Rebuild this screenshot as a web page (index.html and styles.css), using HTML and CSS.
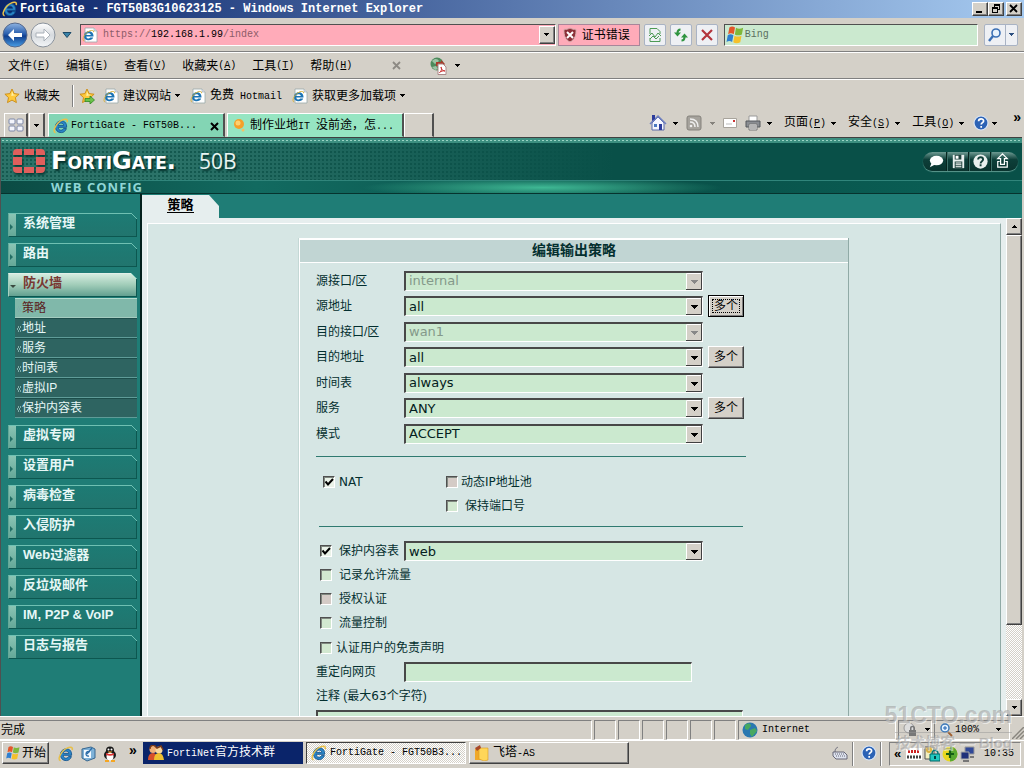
FILE: index.html
```html
<!DOCTYPE html>
<html lang="zh-CN">
<head>
<meta charset="utf-8">
<title>FortiGate - FGT50B3G10623125 - Windows Internet Explorer</title>
<link rel="stylesheet" href="styles.css">
</head>
<body>
<svg class="defs" aria-hidden="true">
  <symbol id="ie" viewBox="0 0 16 16">
    <path d="M13.6 9.3H5.2c.1 3.4 4 3.900 5.300 1.300h2.900C12.400 13.500 10.400 14.600 8.300 14.600 4.600 14.600 2.400 12 2.400 8.700S5 2.800 8.300 2.800c3.500 0 5.600 2.700 5.300 6.500zM5.300 7.400h5.400C10.400 4.300 5.700 4.200 5.300 7.400z" fill="#2a86c8" stroke="#12548f" stroke-width=".9"/>
    <path d="M2.600 14.800C-1.500 14 3.500 4.500 9 2.100c3-1.500 6-1.300 5.300 2" fill="none" stroke="#e8c04a" stroke-width="1.500"/>
  </symbol>
  <symbol id="page" viewBox="0 0 16 16">
    <path d="M3 1h9l3 3v11H3z" fill="#fff" stroke="#9aa" stroke-width=".8"/><path d="M12 1v3h3" fill="#dde" stroke="#9aa" stroke-width=".6"/>
    <path d="M11.500 9.500H4.300c.2 2.400 3 2.600 3.900 1.100h3c-1.200 3.800-9.200 3.800-9.200-1.600 0-6.300 10-6.400 9.500.5zM4.300 7.900h4.500c-.3-2.200-4.200-2.200-4.500 0z" fill="#1c74b4"/>
    <path d="M2 14C-1 13 3 5.500 7.500 4c2.500-1 4.500-.7 4 1.200" fill="none" stroke="#d9b33c"/>
  </symbol>
  <symbol id="star" viewBox="0 0 16 16"><path d="M8 1l2.100 4.600 5 .6-3.700 3.400 1 5L8 12.100l-4.500 2.500 1-5L.9 6.200l5-.6z" fill="#ffc93c" stroke="#c98a12" stroke-width=".9"/><path d="M8 3l1.300 3.500 3 .5-5 1z" fill="#fff0a8"/></symbol>
  <symbol id="arrow" viewBox="0 0 5 3"><path d="M0 0h5v1H4v1H3v1H2V2H1V1H0z" fill="currentColor"/></symbol>
  <symbol id="flag" viewBox="0 0 16 16">
    <path d="M3.500 2C5 1 6.500 1 8 2L7 7.300c-1.500-1-3-1-4.500 0z" fill="#e4562a"/><path d="M8.800 2.200c1.500 1 3.500 1 5.700 0l-1 5.300c-2 1-4 1-5.600 0z" fill="#7fb83a"/>
    <path d="M2.200 8.200c1.500-1 3-1 4.500 0l-1 5.300c-1.500-1-3-1-4.500 0z" fill="#2e7fd0"/><path d="M7.600 8.500c1.500 1 3.500 1 5.600 0l-1 5.300c-2 1-4 1-5.600 0z" fill="#f5c02a"/>
  </symbol>
  <symbol id="help" viewBox="0 0 16 16"><circle cx="8" cy="8" r="7" fill="#2b62b5" stroke="#dbe6f5" stroke-width="1.200"/><path d="M5.600 6.200c0-3.200 5-3.100 5-.2 0 1.700-2.400 1.700-2.400 3.600M8.200 11v1.800" fill="none" stroke="#fff" stroke-width="1.700"/></symbol>
</svg>

<div class="window">
  <header class="titlebar">
    <svg class="i16"><use href="#ie"/></svg>
    <h1>FortiGate - FGT50B3G10623125 - Windows Internet Explorer</h1>
    <div class="winbtns">
      <button aria-label="最小化"><svg viewBox="0 0 12 10"><path d="M2 7h6v2H2z"/></svg></button><button aria-label="还原"><svg viewBox="0 0 12 10"><path d="M4 0h6v6H8V9H2V3h2zm1 2v1h3v2h1V2zM3 5v3h4V5z" fill-rule="evenodd"/></svg></button><button class="close" aria-label="关闭"><svg viewBox="0 0 12 10"><path d="M2 1l7 7M9 1L2 8" stroke="#000" stroke-width="1.800"/></svg></button>
    </div>
  </header>

  <div class="navbar">
    <div class="history">
      <button aria-label="后退"><svg viewBox="0 0 26 26"><defs><linearGradient id="bk" x2="0" y2="1"><stop stop-color="#8fb4e2"/><stop offset=".45" stop-color="#2a5fae"/><stop offset=".55" stop-color="#103f8e"/><stop offset="1" stop-color="#4aa0e8"/></linearGradient><linearGradient id="fw" x2="0" y2="1"><stop stop-color="#fff"/><stop offset=".5" stop-color="#d6dade"/><stop offset="1" stop-color="#f4f6f8"/></linearGradient></defs><circle cx="13" cy="13" r="12" fill="url(#bk)" stroke="#56698c"/><path d="M6 13l6-6v4h8v4h-8v4z" fill="#fff"/></svg></button>
      <button aria-label="前进"><svg viewBox="0 0 26 26"><circle cx="13" cy="13" r="12" fill="url(#fw)" stroke="#8a929c"/><path d="M20 13l-6-6v4H6v4h8v4z" fill="#fff" stroke="#a9b0b8"/></svg></button>
      <button class="hist" aria-label="最近的页面"><svg viewBox="0 0 10 6"><path d="M1 .5h8L5 5.500z" fill="#3a83a8" stroke="#1c4a68"/></svg></button>
    </div>
    <div class="address">
      <svg class="i16"><use href="#page"/></svg>
      <span class="m url"><i>https://</i>192.168.1.99<i>/index</i></span>
      <button class="drop" aria-label="地址列表"><svg class="ar"><use href="#arrow"/></svg></button>
    </div>
    <button class="cert"><svg class="i16" viewBox="0 0 16 16"><path d="M8 1c2 1.200 4 1.500 6 1.300C14.300 8 13 12.500 8 15 3 12.500 1.700 8 2 2.300 4 2.500 6 2.200 8 1z" fill="#8c3038" stroke="#d8b0b0"/><path d="M5 5l6 6M11 5l-6 6" stroke="#fff" stroke-width="2"/></svg>证书错误</button>
    <button class="nb" aria-label="兼容性视图"><svg class="i16" viewBox="0 0 16 16"><path d="M3 7V1.500h7L13 4.500V7M3 11v3.500h10V11M2 9l3-3 3 4 3-4 3 3M3 12l3-3 3 3 3-3" fill="none" stroke="#4d9a55"/></svg></button>
    <button class="nb" aria-label="刷新"><svg class="i16" viewBox="0 0 16 16"><path d="M7.500 2.500C5 2.500 4.500 4 4.500 6M8.500 13.500c2.500 0 3-1.500 3-3.500" fill="none" stroke="#2f9440" stroke-width="2"/><path d="M1 5.500h7L4.500 9.500zM8 10.500h7L11.500 6.500z" fill="#2f9440"/></svg></button>
    <button class="nb" aria-label="停止"><svg class="i16" viewBox="0 0 16 16"><path d="M3 3l10 10M13 3L3 13" stroke="#b3343c" stroke-width="2.200"/></svg></button>
    <div class="search"><svg class="i20" viewBox="0 0 16 16"><use href="#flag"/></svg><input type="text" class="m" aria-label="Bing 搜索" placeholder="Bing"></div>
    <div class="go"><button aria-label="搜索"><svg class="i16" viewBox="0 0 16 16"><circle cx="9" cy="6" r="4" fill="#e8f2fc" stroke="#3b6fb4" stroke-width="1.600"/><path d="M6 9l-4 5" stroke="#3b6fb4" stroke-width="2.400"/></svg></button><button class="godrop" aria-label="搜索选项"><svg class="ar blue"><use href="#arrow"/></svg></button></div>
  </div>

  <nav class="menubar">
    <button>文件<span class="m">(<u>F</u>)</span></button><button>编辑<span class="m">(<u>E</u>)</span></button><button>查看<span class="m">(<u>V</u>)</span></button><button>收藏夹<span class="m">(<u>A</u>)</span></button><button>工具<span class="m">(<u>T</u>)</span></button><button>帮助<span class="m">(<u>H</u>)</span></button>
    <button class="mclose" aria-label="关闭工具栏"><svg viewBox="0 0 9 9"><path d="M1 1l7 7M8 1L1 8" stroke="#8d8a84" stroke-width="1.800"/></svg></button>
    <button class="pdf" aria-label="转换"><svg class="i18" viewBox="0 0 18 18"><circle cx="8" cy="7" r="6.500" fill="#4c8a5c"/><path d="M3 4c3-3 6-2 7 0L6 7zM3 10l4-1 2 3-3 1z" fill="#9cc3a4"/><path d="M7 5h5v-2l4 4-4 4V9H7z" fill="#a83a2a"/><path d="M9 7h5l3 3v7.500H9z" fill="#fff" stroke="#a88"/><path d="M10.500 15.500c3-2 2-6 1.500-5.500s1 4 4 4c-2-.6-4 .3-5.500 1.500" fill="none" stroke="#c33"/></svg><svg class="ar"><use href="#arrow"/></svg></button>
  </nav>

  <div class="favbar">
    <button class="fav"><svg class="i16"><use href="#star"/></svg>收藏夹</button>
    <button class="add" aria-label="添加到收藏夹栏"><svg class="i16" viewBox="0 0 16 16"><use href="#star"/><path d="M6 10.500h5V8l4.500 4L11 16v-2.500H6z" fill="#6cc24a" stroke="#2f8a25" stroke-width=".8"/></svg></button>
    <a href="#"><svg class="i16"><use href="#page"/></svg>建议网站<svg class="ar"><use href="#arrow"/></svg></a>
    <a href="#"><svg class="i16"><use href="#page"/></svg><span>免费<span class="m"> Hotmail</span></span></a>
    <a href="#"><svg class="i16"><use href="#page"/></svg>获取更多加载项<svg class="ar"><use href="#arrow"/></svg></a>
  </div>

  <div class="tabbar">
    <button class="qt" aria-label="快速导航选项卡"><svg class="i16" viewBox="0 0 16 16"><g fill="#f3f5fb" stroke="#7d88a8"><rect x="1" y="2" width="6" height="5" rx="1"/><rect x="9" y="2" width="6" height="5" rx="1"/><rect x="1" y="9" width="6" height="5" rx="1"/><rect x="9" y="9" width="6" height="5" rx="1"/></g></svg></button>
    <button class="qd" aria-label="选项卡列表"><svg class="ar"><use href="#arrow"/></svg></button>
    <button class="tab active"><svg class="i16"><use href="#ie"/></svg><span class="m">FortiGate - FGT50B...</span><svg class="x" viewBox="0 0 9 9"><path d="M1 1l7 7M8 1L1 8" stroke="#000" stroke-width="2"/></svg></button>
    <button class="tab"><svg class="i16" viewBox="0 0 16 16"><circle cx="7" cy="6" r="5" fill="#f5a02a"/><circle cx="6" cy="5" r="2.500" fill="#ffd070"/><circle cx="11" cy="12" r="1.500" fill="#f8c060"/></svg><span>制作业地<span class="m">IT </span>没前途，怎<span class="m">...</span></span></button>
    <button class="newtab" aria-label="新选项卡"></button>
    <div class="cmds">
      <button aria-label="主页"><svg class="i18" viewBox="0 0 18 18"><path d="M3 9v7h12V9L9 3z" fill="#f4f6ff" stroke="#5a6aa8"/><path d="M1 10L9 2l8 8" fill="none" stroke="#7080c0" stroke-width="1.500"/><path d="M3 1h3v4L3 7zM10 10h3v6h-3z" fill="#2c3c9c"/><path d="M5 10h3v3H5z" fill="#4a78c0"/></svg><svg class="ar"><use href="#arrow"/></svg></button>
      <button class="off" aria-label="源"><svg class="i16" viewBox="0 0 16 16"><rect x="1" y="1" width="14" height="14" rx="2" fill="#a5a29c" stroke="#85827c"/><circle cx="5" cy="11" r="1.300" fill="#eee"/><path d="M4 7c3 0 5 2 5 5M4 4c5 0 8 3 8 8" fill="none" stroke="#eee" stroke-width="1.500"/></svg><svg class="ar"><use href="#arrow"/></svg></button>
      <button aria-label="阅读邮件"><svg class="i14" viewBox="0 0 14 10"><path d="M.5.5h13v9H.5z" fill="#fff" stroke="#a8a49c"/><path d="M10 2h2v2h-2z" fill="#c33"/><path d="M3 6h6" stroke="#bbb"/></svg></button>
      <button aria-label="打印"><svg class="i16" viewBox="0 0 16 16"><path d="M4 1h8v6H4z" fill="#fff" stroke="#999"/><path d="M1 6h14v6H1z" fill="#8a8d92" stroke="#55585c"/><path d="M4 9h8v6H4z" fill="#f4f4f4" stroke="#777"/><path d="M5 11h6M5 13h6" stroke="#777"/></svg><svg class="ar"><use href="#arrow"/></svg></button>
      <button class="t"><span>页面<span class="m">(<u>P</u>)</span></span><svg class="ar"><use href="#arrow"/></svg></button>
      <button class="t"><span>安全<span class="m">(<u>S</u>)</span></span><svg class="ar"><use href="#arrow"/></svg></button>
      <button class="t"><span>工具<span class="m">(<u>O</u>)</span></span><svg class="ar"><use href="#arrow"/></svg></button>
      <button class="hp" aria-label="帮助"><svg class="i16"><use href="#help"/></svg><svg class="ar"><use href="#arrow"/></svg></button>
      <button class="more">»</button>
    </div>
  </div>

  <div class="page">
    <header class="brand">
      <div class="brandtop">
        <svg class="logo" viewBox="0 0 34 26"><g fill="#df5f5c"><path d="M5 1h5v6H1V5q0-4 4-4zM12 1h10v6H12zM24 1h5q4 0 4 4v2h-9zM1 9h9v8H1zM24 9h9v8h-9zM1 19h9v6H5q-4 0-4-4zM12 19h10v6H12zM24 19h9v2q0 4-4 4h-5z"/></g></svg>
        <span class="name">FortiGate.</span><span class="model">50B</span>
        <div class="tools">
          <button aria-label="在线支持"><svg viewBox="0 0 20 20"><ellipse cx="10" cy="9" rx="7" ry="5" fill="#fff"/><path d="M5 11l-2 5 6-3z" fill="#fff"/></svg></button><button aria-label="备份"><svg viewBox="0 0 20 20"><path d="M4 3h12v14H4z" fill="#e8f0ee"/><path d="M6 3h7v5H6zM6 10h8v7H6z" fill="#20443f"/><path d="M7 4h3v3H7zM7 11h6v1H7zm0 2h6v1H7zm0 2h6v1H7z" fill="#fff"/></svg></button><button aria-label="在线帮助"><svg viewBox="0 0 20 20"><circle cx="10" cy="10" r="7.500" fill="#e8f0ee"/><path d="M7.500 8c0-3.500 5.200-3 5.200-.2 0 2-2.600 1.700-2.600 4.200M10.100 13v2" fill="none" stroke="#123f39" stroke-width="2"/></svg></button><button aria-label="退出"><svg viewBox="0 0 20 20"><path d="M10 2l5 5h-3v6H8V7H5zM7 10H5v6h10v-6h-2" fill="none" stroke="#fff" stroke-width="1.300"/></svg></button>
        </div>
      </div>
      <div class="webconfig">WEB CONFIG</div>
    </header>

    <div class="body">
      <nav class="side">
        <a class="g" href="#">系统管理</a>
        <a class="g" href="#">路由</a>
        <a class="g open" href="#">防火墙</a>
        <div class="sub"><a class="on" href="#">策略</a><a href="#">地址</a><a href="#">服务</a><a href="#">时间表</a><a href="#">虚拟IP</a><a href="#">保护内容表</a></div>
        <a class="g" href="#">虚拟专网</a>
        <a class="g" href="#">设置用户</a>
        <a class="g" href="#">病毒检查</a>
        <a class="g" href="#">入侵防护</a>
        <a class="g" href="#">Web过滤器</a>
        <a class="g" href="#">反垃圾邮件</a>
        <a class="g" href="#">IM, P2P &amp; VoIP</a>
        <a class="g" href="#">日志与报告</a>
      </nav>

      <main class="main">
        <div class="ptabs"><a href="#"><span>策略</span></a></div>
        <div class="frame">
          <div class="pane">
            <form class="panel">
              <h2>编辑输出策略</h2>
              <div class="fields">
                <div class="row"><label for="a">源接口/区</label><select id="a" disabled><option>internal</option></select></div>
                <div class="row b"><label for="b">源地址</label><select id="b"><option>all</option></select><button type="button" class="multi focus">多个</button></div>
                <div class="row"><label for="c">目的接口/区</label><select id="c" disabled><option>wan1</option></select></div>
                <div class="row b"><label for="d">目的地址</label><select id="d"><option>all</option></select><button type="button" class="multi">多个</button></div>
                <div class="row"><label for="e">时间表</label><select id="e"><option>always</option></select></div>
                <div class="row b"><label for="f">服务</label><select id="f"><option>ANY</option></select><button type="button" class="multi">多个</button></div>
                <div class="row"><label for="g">模式</label><select id="g"><option>ACCEPT</option></select></div>
              </div>
              <div class="nat">
                <label class="ck"><input type="checkbox" checked><span class="v">NAT</span></label>
                <div>
                  <label class="ck"><input type="checkbox" disabled><span>动态<span class="v">IP</span>地址池</span></label>
                  <label class="ck"><input type="checkbox">保持端口号</label>
                </div>
              </div>
              <div class="opts">
                <div class="prof"><label class="ck"><input type="checkbox" checked>保护内容表</label><select aria-label="保护内容表"><option>web</option></select></div>
                <label class="ck"><input type="checkbox">记录允许流量</label>
                <label class="ck"><input type="checkbox" disabled>授权认证</label>
                <label class="ck"><input type="checkbox">流量控制</label>
                <label class="ck last"><input type="checkbox">认证用户的免责声明</label>
              </div>
              <div class="redir"><label for="r">重定向网页</label><input id="r" type="text"></div>
              <label class="note" for="n">注释 (最大<span class="v">63</span>个字符)</label>
              <textarea id="n" rows="4"></textarea>
            </form>
          </div>
          <div class="scroll"><button aria-label="向上滚动"><svg class="ar up"><use href="#arrow"/></svg></button><div class="track"><div class="thumb"></div></div><button aria-label="向下滚动"><svg class="ar"><use href="#arrow"/></svg></button></div>
        </div>
      </main>
    </div>
  </div>

  <footer class="status">
    <div class="msg">完成</div><div class="c"></div><div class="c"></div><div class="c"></div><div class="c"></div><div class="c"></div><div class="c"></div>
    <div class="zone"><svg class="i16" viewBox="0 0 16 16"><circle cx="8" cy="8" r="7.500" fill="#2a78b0"/><path d="M3 3c4-3 6-1 6 1L6 8 3 7zM8 8l5-2 2 3-5 6-2-3z" fill="#48a860"/></svg><span class="m">Internet</span></div>
    <div class="prot"><svg class="i16" viewBox="0 0 16 16"><circle cx="6" cy="6" r="5" fill="#ddd" stroke="#999"/><path d="M7 8V6c0-3 5-3 5 0v2h1v6H6V8zm1.500 0h2V6c0-1-2-1-2 0z" fill="#777"/></svg><svg class="ar"><use href="#arrow"/></svg></div>
    <div class="zoom"><svg class="i14" viewBox="0 0 14 14"><circle cx="6" cy="5" r="4" fill="#e4f2ff" stroke="#3c78b8" stroke-width="1.500"/><path d="M6 3v4M4 5h4" stroke="#2060b0"/><path d="M9 9l4 4" stroke="#a06030" stroke-width="2"/></svg><span class="m">100%</span><svg class="ar"><use href="#arrow"/></svg></div>
    <svg class="grip" viewBox="0 0 12 12"><path d="M12 0L0 12M12 4L4 12M12 8L8 12" stroke="#88857e" stroke-width="1.500"/></svg>
  </footer>

  <footer class="taskbar">
    <button class="start"><svg class="i16"><use href="#flag"/></svg>开始</button>
    <div class="quick">
      <svg class="i16"><use href="#ie"/></svg>
      <svg class="i16" viewBox="0 0 16 16"><path d="M2 3l9-2 4 2v9l-8 3-5-3z" fill="#7fb2d8" stroke="#39678f"/><path d="M4 4h7v8H4z" fill="#f4faff"/><path d="M10 6c-4-3-6 5-1 4M7 8l5-6" fill="none" stroke="#2b6ca8" stroke-width="1.300"/></svg>
      <svg class="i16" viewBox="0 0 16 16"><ellipse cx="8" cy="9" rx="6" ry="5" fill="#1a1a1a"/><circle cx="8" cy="4.500" r="4" fill="#1a1a1a"/><ellipse cx="8" cy="10.500" rx="3.500" ry="4" fill="#fff"/><circle cx="6.500" cy="3.500" r="1" fill="#fff"/><circle cx="9.500" cy="3.500" r="1" fill="#fff"/><path d="M4 7q4 2 8 0v2q-4 1.500-8 0z" fill="#d33"/><path d="M5.500 5.500h5L8 7zM3 14h4v2H3zM9 14h4v2H9z" fill="#f5a623"/></svg>
      <span>»</span>
    </div>
    <button class="task flash"><svg class="i16" viewBox="0 0 16 16"><circle cx="5" cy="4.500" r="3.500" fill="#f0b078"/><circle cx="11" cy="5" r="3.500" fill="#f8d8a0"/><path d="M0 15q0-7 5-7 4 0 5 7z" fill="#d8502a"/><path d="M6 15q0-7 5-7 4 0 5 7z" fill="#f0c030"/><path d="M2 4q0-4 4-4l3 3 4-2 2 4" fill="none" stroke="#7a3a18" stroke-width="1.500"/></svg><span><span class="m">FortiNet</span>官方技术群</span></button>
    <button class="task cur"><svg class="i16"><use href="#ie"/></svg><span class="m">FortiGate - FGT50B3...</span></button>
    <button class="task"><svg class="i16" viewBox="0 0 16 16"><path d="M1 4h7v11H1z" fill="#f0a828"/><path d="M5 3h9v12l-4 1-5-2z" fill="#ffd658" stroke="#d89820" stroke-width=".6"/><path d="M1 3l5-3 1 3-4 3z" fill="#a84828"/></svg><span>飞塔<span class="m">-AS</span></span></button>
    <div class="keys"><svg class="i16" viewBox="0 0 16 16"><path d="M1 7h11l3 3v4H4L1 11z" fill="#dde2ee" stroke="#667"/><path d="M3 9h9M4 11h9" stroke="#667" stroke-dasharray="1 1"/><path d="M3 7c0-4 2-4 3-5" fill="none" stroke="#667"/></svg></div>
    <div class="hlp"><svg class="i16"><use href="#help"/></svg></div>
    <div class="tray"><span>«</span>
      <svg class="i16" viewBox="0 0 16 16"><path d="M0 2h16v12H0z" fill="#fff"/><path d="M2 5.500h12" stroke="#c22" stroke-width="3" stroke-dasharray="2 1"/><path d="M1 11h14" stroke="#444" stroke-width="3" stroke-dasharray="2 1"/></svg>
      <svg class="i16" viewBox="0 0 16 16"><path d="M1 1h9v12H1z" fill="#f3efc0" stroke="#555"/><circle cx="5" cy="4" r="3" fill="#d8b040"/><path d="M8 8c0-5 6-5 6 0" fill="none" stroke="#087878" stroke-width="1.500"/><path d="M6 8h10v7H6z" fill="#20c8c0" stroke="#066"/><path d="M11 10v3" stroke="#044" stroke-width="2"/></svg>
      <svg class="i16" viewBox="0 0 16 16"><circle cx="8" cy="8" r="7.500" fill="#e8d820"/><path d="M8 .5a7.500 7.500 0 010 15z" fill="#58a830"/><path d="M8 4v8M4 8h8" stroke="#145c14" stroke-width="2.200"/></svg>
      <svg class="i16" viewBox="0 0 16 16"><path d="M5 1h9v7H5z" fill="#304898" stroke="#999"/><path d="M1 6h8v7H1z" fill="#20307a" stroke="#aaa"/><path d="M3 15h6M10 11h4" stroke="#777" stroke-width="2"/></svg>
      <time class="m">10:35</time>
    </div>
  </footer>
</div>
<div class="watermark"><b>51CTO.com</b><span>技术博客 — Blog</span></div>
</body>
</html>
```
FILE: styles.css
```css
* { box-sizing: border-box; }
body {
  margin: 0;
  background: #d4d0c8;
  color: #000;
  font: 12px/16px "Liberation Sans", "Noto Sans CJK SC", sans-serif;
}
button {
  margin: 0; padding: 0; border: 0; background: none; color: inherit; font: inherit;
  display: inline-flex; align-items: center; white-space: nowrap;
}
a { color: inherit; text-decoration: none; }
i { font-style: normal; }
svg { display: block; flex: none; }
.defs { display: none; }
.m { font-family: "Liberation Mono", monospace; font-size: 10px; white-space: pre; }
.v { font-family: "DejaVu Sans", sans-serif; }
.i14 { width: 14px; height: 14px; }
.i16 { width: 16px; height: 16px; }
.i18 { width: 18px; height: 18px; }
.i20 { width: 20px; height: 20px; }
.ar { width: 5px; height: 3px; }
.ar.blue { color: #2c4f80; }

.window { display: flex; flex-direction: column; height: 100vh; overflow: hidden; }

/* Title bar */
.titlebar {
  display: flex; align-items: center; flex: none; height: 18px; padding: 0 2px; gap: 2px;
  background: linear-gradient(90deg, #0a246a, #a6caf0); color: #fff;
}
.titlebar h1 { flex: 1; margin: 0; font: bold 12px/18px "Liberation Mono", monospace; white-space: nowrap; }
.winbtns { display: flex; }
.winbtns button { width: 16px; height: 14px; justify-content: center; }
.winbtns svg { width: 12px; height: 10px; }
.winbtns .close { margin-left: 2px; }
.winbtns button, .start, .task, .drop, .scroll button, .thumb, .multi {
  background: #d4d0c8;
  border: 1px solid; border-color: #fff #404040 #404040 #fff;
  box-shadow: inset -1px -1px #808080;
}

/* Address row */
.navbar {
  display: flex; align-items: center; flex: none; height: 34px; padding: 0 6px 0 2px; gap: 4px;
  border-bottom: 1px solid #808080;
}
.history { display: flex; align-items: center; gap: 2px; width: 74px; }
.history svg { width: 26px; height: 26px; }
.history .hist { margin-left: 4px; }
.history .hist svg { width: 10px; height: 6px; }
.address {
  display: flex; align-items: center; flex: 15; height: 22px; padding-left: 1px; gap: 5px;
  background: #ffabb9; border: 1px solid; border-color: #505050 #fff #fff #505050;
}
.url { flex: 1; }
.url i { color: #8c5c68; }
.drop { width: 16px; height: 18px; justify-content: center; }
.cert {
  height: 22px; width: 82px; padding-left: 3px; gap: 4px; margin-left: -2px;
  background: #ffabb9; border: 1px solid #a8869a;
}
.nb, .go { height: 22px; background: #eef0f4; border: 1px solid #a9b3c4; border-radius: 2px; }
.nb { width: 22px; justify-content: center; }
.search {
  display: flex; align-items: center; flex: 8; height: 22px; margin: 0 2px; background: #cbe9cf;
  border: 1px solid; border-color: #505050 #fff #fff #505050;
}
.search input { flex: 1; min-width: 0; border: 0; padding: 0; background: none; outline: 0; }
.search input::placeholder { color: #5c7060; opacity: 1; }
.go { display: flex; width: 34px; }
.go button { flex: 1; justify-content: center; }
.go .godrop { flex: none; width: 12px; border-left: 1px solid #a9b3c4; }

/* Menu and favourites */
.menubar {
  display: flex; align-items: center; flex: none; height: 27px; padding: 0 8px; gap: 16px;
  border-top: 1px solid #fff; border-bottom: 1px solid #808080;
}
.mclose { margin-left: 24px; }
.mclose svg { width: 9px; height: 9px; }
.pdf { margin-left: 12px; gap: 8px; }
.favbar { display: flex; align-items: center; flex: none; height: 32px; padding: 0 4px; border-top: 1px solid #fff; }
.fav { gap: 4px; padding-right: 12px; height: 22px; border-right: 1px solid #808080; box-shadow: 1px 0 #fff; }
.add { margin: 0 8px 0 6px; }
.favbar a { display: flex; align-items: center; gap: 4px; margin-right: 10px; }

/* Tabs and command bar */
.tabbar { display: flex; align-items: stretch; flex: none; height: 26px; padding: 2px 0 0 4px; }
.qt, .qd, .tab, .newtab { border: 1px solid; border-color: #fff #505050 transparent #fff; border-right-width: 2px; }
.qt { width: 24px; justify-content: center; }
.qd { width: 16px; justify-content: center; margin: 0 3px 0 1px; }
.tab { width: 177px; padding: 2px 4px 0; gap: 2px; background: #96e5c2; }
.tab.active { background: #83d5b4; margin-right: 2px; }
.tab .x { width: 9px; height: 9px; margin-left: auto; }
.newtab { width: 30px; }
.cmds { display: flex; align-items: center; margin-left: auto; padding: 0 3px 4px 0; gap: 8px; }
.cmds button { gap: 6px; }
.cmds .off { color: #85827c; gap: 8px; }
.cmds .t { margin-left: 4px; gap: 5px; }
.cmds .hp { gap: 3px; margin-left: 1px; }
.cmds .more { margin: -12px 0 0 8px; font: bold 14px/16px "Liberation Sans", sans-serif; }

/* Web page */
.page { display: flex; flex-direction: column; flex: 1; min-height: 0; margin-right: 2px; border-top: 1px solid #404040; border-left: 1px solid #505050; background: #1f7d76; }
.brand { flex: none; height: 56px; background: #095048; border-bottom: 1px solid #06332e; }
.brandtop {
  display: flex; align-items: center; height: 43px; padding: 4px 4px 0 11px;
  border-bottom: 1px solid #30857b;
  background:
    radial-gradient(circle, #9ad4c4 1px, transparent 1px) 0 0 / 4px 5px repeat-x,
    linear-gradient(#3c8f80, #3c8f80) 0 0 / 100% 5px no-repeat,
    linear-gradient(90deg, transparent 0, transparent 15%, #095048 60%),
    radial-gradient(circle, #14594f 1px, transparent 1px) 0 0 / 4px 4px,
    linear-gradient(90deg, #2b7268, #2d776c);
}
.logo { width: 34px; height: 26px; margin-right: 5px; filter: drop-shadow(1px 2px 1px #063c36); }
.name { min-width: 140px; color: #fff; font: small-caps bold 24px/26px "DejaVu Sans", sans-serif; text-shadow: 2px 2px 2px #04302b; }
.model { margin-left: 8px; color: #e8f4f2; font: 21px/26px "Open Sans", sans-serif; text-shadow: 2px 2px 2px #04302b; }
.tools { display: flex; margin-left: auto; padding: 0 6px 0 4px; border-radius: 10px; background: linear-gradient(#6f9c94, #0d3f39 40%, #0a342f); box-shadow: 0 1px 1px #5f9a90; }
.tools button + button { border-left: 1px solid #07251f; box-shadow: inset 1px 0 #3d7068; padding-left: 2px; }
.tools svg { width: 19px; height: 19px; }
.webconfig {
  height: 12px; padding-left: 50px; color: #8fd6d6; font: bold 13px/12px "Open Sans", sans-serif; letter-spacing: 1px; white-space: nowrap;
  background:
    radial-gradient(ellipse 180px 10px at 53% 55%, #3fb894, transparent),
    linear-gradient(90deg, #0b4b44, #126a60 25%, #095048 65%, #0a6258);
}
.body { display: flex; flex: 1; min-height: 0; }
.side { flex: none; width: 141px; padding: 19px 3px 0 7px; border-right: 2px solid #04201d; overflow: hidden; }
.g {
  display: block; position: relative; height: 24px; margin-bottom: 6px; padding-left: 14px;
  color: #e6f7f6; font: bold 13px/18px "Liberation Sans", "Noto Sans CJK SC", sans-serif;
  background: linear-gradient(#8ac4b4, #64a898) 0 0 / 7px 100% no-repeat, linear-gradient(#1d7b74, #21756e);
  border: 1px solid; border-color: #6fc0b2 #0c5750 #0c5750 #64a898;
}
.g::before { content: ""; position: absolute; left: 1px; top: 10px; border: 3px solid transparent; border-left-color: #226e65; border-right: 0; }
.g::after {
  content: ""; position: absolute; right: -1px; top: -1px; width: 6px; height: 6px;
  background: linear-gradient(45deg, transparent 42%, #6fc0b2 42%, #6fc0b2 58%, #1f7d76 58%);
}
.g.open { margin-bottom: 1px; color: #793833; border-color: #e0f0e8 #0c5750 #0c5750 #a8d0c0; background: linear-gradient(#d4ecdf, #a0ccb8 50%, #62a090); }
.g.open::before { top: 11px; border: 3px solid transparent; border-top-color: #3a4a40; border-bottom: 0; }
.sub { margin: 0 0 7px 7px; }
.sub a { display: block; position: relative; height: 20px; padding-left: 7px; color: #e6f7f6; line-height: 18px; background: #2e6461; border-bottom: 1px solid #5f9c98; border-top: 1px solid #1c4e4b; }
.sub a::before { content: ""; position: absolute; left: 2px; top: 7px; width: 4px; height: 6px; background: repeating-conic-gradient(#7fb0ac 0 25%, transparent 0 50%) 0 0 / 2px 4px; }
.sub .on { color: #5a201c; background: #80b8aa; border-color: #b4dccf #80b8aa #a4ccc0; }

.main { display: flex; flex-direction: column; flex: 1; min-width: 0; }
.ptabs { flex: none; height: 24px; padding-top: 1px; }
.ptabs a { display: block; width: 77px; height: 23px; background: #e6eeee; clip-path: polygon(0 0, 67px 0, 100% 11px, 100% 100%, 0 100%); text-align: center; font: bold 13px/17px "Noto Sans CJK SC", sans-serif; }
.ptabs span { display: inline-block; border-bottom: 1px solid #000; }
.frame { display: flex; flex: 1; min-height: 0; background: #e6eeee; padding: 0 0 0 5px; }
.pane { flex: 1; min-width: 0; overflow: hidden; margin: 5px 5px 0 0; padding-top: 14px; background: #d6e6e4; border: 1px solid; border-color: #fff #90aaa6 transparent #fff; border-bottom: 0; }
.scroll { display: flex; flex-direction: column; flex: none; width: 16px; }
.scroll button { height: 17px; justify-content: center; }
.up { transform: rotate(180deg); }
.track { flex: 1; background: repeating-conic-gradient(#fff 0 25%, #d4d0c8 0 50%) 0 0 / 2px 2px; }
.thumb { height: 84%; }

/* Policy form */
.panel { width: 550px; margin: 0 auto; border-left: 1px solid #fff; border-right: 1px solid #90aaa6; color: #042f2f; box-shadow: -1px 0 #c4d8d5; font-size: 12px; height: 600px; }
.panel h2 { margin: 0 0 5px; height: 25px; font: bold 14px/18px "Noto Sans CJK SC", sans-serif; text-align: center; background: #c1d5d3; border-top: 2px solid #fff; border-bottom: 1px solid #fff; }
.fields { margin: 0 102px 0 16px; padding-bottom: 10px; border-bottom: 1px solid #2f7a70; }
.row { display: flex; align-items: center; height: 25px; }
.row.b { height: 26px; }
.row label { flex: none; width: 88px; }
select {
  appearance: none; flex: none; width: 299px; height: 20px; margin: 0; padding: 0 20px 0 3px; border-radius: 0;
  color: #042020; font: 13px/16px "DejaVu Sans", sans-serif; opacity: 1;
  border: 2px solid; border-color: #484848 #fff #fff #484848; border-right-width: 1px; border-bottom-width: 1px;
  background: #cbe9cf url("data:image/svg+xml,%3Csvg xmlns='http://www.w3.org/2000/svg' width='16' height='17'%3E%3Cpath fill='%23d4d0c8' d='M0 0h16v17H0z'/%3E%3Cpath d='M0 16.500h15.500V0' fill='none' stroke='%23404040'/%3E%3Cpath d='M.500 16V.500H15' fill='none' stroke='%23fff'/%3E%3Cpath d='M5 7h7v1h-1v1h-1v1H9v1H8v-1H7V9H6V8H5z'/%3E%3C/svg%3E") right 0 / 16px 17px no-repeat;
}
select:disabled {
  color: #84998a; opacity: 1;
  background-image: url("data:image/svg+xml,%3Csvg xmlns='http://www.w3.org/2000/svg' width='16' height='17'%3E%3Cpath fill='%23d4d0c8' d='M0 0h16v17H0z'/%3E%3Cpath d='M0 16.500h15.500V0' fill='none' stroke='%23404040'/%3E%3Cpath d='M.500 16V.500H15' fill='none' stroke='%23fff'/%3E%3Cpath fill='%23888' d='M5 7h7v1h-1v1h-1v1H9v1H8v-1H7V9H6V8H5z'/%3E%3C/svg%3E");
}
.multi { width: 36px; height: 22px; margin-left: 5px; justify-content: center; color: #000; }
.multi.focus { border-color: #000; box-shadow: inset 1px 1px #fff, inset -1px -1px #808080; outline: 1px dotted #000; outline-offset: -5px; }
.ck { display: flex; align-items: center; height: 24px; gap: 7px; }
input[type="checkbox"] {
  appearance: none; flex: none; width: 12px; height: 12px; margin: 0; background: #d2e8d0;
  border: 1px solid; border-color: #505050 #fff #fff #505050; box-shadow: inset 1px 1px #808880;
}
input[type="checkbox"]:checked { background: #eaf2e8 url("data:image/svg+xml,%3Csvg xmlns='http://www.w3.org/2000/svg' viewBox='0 0 10 10'%3E%3Cpath d='M1.500 4.500l2.500 3L9 2' fill='none' stroke='%23000' stroke-width='2'/%3E%3C/svg%3E") center / 10px 10px no-repeat; }
input[type="checkbox"]:disabled { background: #d4cbc6; }
.nat { display: flex; align-items: flex-start; margin: 0 105px 0 19px; padding: 13px 0 8px 4px; border-bottom: 1px solid #2f7a70; }
.nat > .ck { width: 123px; gap: 4px; }
.nat div .ck:first-child { gap: 3px; }
.opts { padding: 12px 0 0 20px; }
.prof { display: flex; align-items: center; }
.prof .ck { width: 84px; white-space: nowrap; }
.opts .last { height: 26px; gap: 4px; }
.redir { display: flex; align-items: center; height: 22px; padding-left: 16px; }
.redir label { width: 88px; }
.redir input, textarea { border: 2px solid; border-color: #484848 #fff #fff #484848; border-right-width: 1px; border-bottom-width: 1px; border-radius: 0; background: #cbe9cf; }
.redir input { width: 288px; height: 20px; }
.note { display: block; margin: 4px 16px 5px; line-height: 18px; }
textarea { display: block; width: 427px; margin-left: 16px; resize: none; overflow-y: scroll; }

/* Status bar */
.status { display: flex; align-items: center; flex: none; height: 24px; gap: 2px; padding: 3px 0 1px; border-top: 1px solid #fff; }
.status > div { height: 20px; border: 1px solid; border-color: #808080 #fff #fff #808080; display: flex; align-items: center; }
.status .msg { flex: 1; border-left: 0; padding-left: 1px; }
.status .c { width: 22px; }
.status .zone { width: 158px; gap: 4px; padding-left: 3px; }
.status .prot { width: 34px; gap: 6px; padding-left: 4px; }
.status .zoom { width: 76px; gap: 2px; padding: 0 8px 0 4px; }
.zoom .ar { margin-left: auto; }
.grip { width: 12px; height: 12px; align-self: flex-end; }

/* Taskbar */
.taskbar { display: flex; align-items: flex-start; flex: none; height: 28px; padding: 1px 3px 0 2px; border-top: 1px solid #fff; }
.start, .task { height: 22px; }
.start { width: 47px; padding-left: 2px; gap: 1px; }
.quick { display: flex; align-items: center; gap: 6px; width: 94px; height: 24px; padding-left: 9px; }
.quick span { margin: -8px 0 0 5px; font: bold 14px/16px "Liberation Sans", sans-serif; }
.task { width: 160px; margin-right: 3px; padding-left: 4px; gap: 3px; flex: 0 1 160px; min-width: 0; overflow: hidden; }
.flash { background: #0a246a; border-color: #0a246a; box-shadow: none; color: #fff; }
.cur { border-color: #404040 #fff #fff #404040; box-shadow: none; background: repeating-conic-gradient(#fff 0 25%, #d4d0c8 0 50%) 0 0 / 2px 2px; }
.keys { height: 24px; margin-left: auto; padding: 3px 4px 3px 0; border-right: 1px solid #808080; box-shadow: 1px 0 #fff; }
.hlp { width: 28px; height: 24px; margin-right: 8px; padding: 3px 4px 3px 8px; border-right: 1px solid #808080; box-shadow: 1px 0 #fff; }
.tray { display: flex; align-items: center; height: 24px; width: 132px; gap: 2px; padding: 0 6px 0 4px; border: 1px solid; border-color: #808080 #fff #fff #808080; }
.tray span { font: bold 13px/16px "Liberation Sans", sans-serif; margin-right: 3px; }
.tray time { margin-left: auto; }

/* Stamp over the lower right corner */
.watermark { position: absolute; right: 12px; bottom: 17px; display: flex; flex-direction: column; align-items: flex-end; gap: 6px; color: rgba(150, 150, 150, .5); text-shadow: 1px 1px rgba(255, 255, 255, .5); pointer-events: none; }
.watermark b { font: bold 23px/22px "Liberation Sans", sans-serif; }
.watermark span { padding-top: 2px; border-top: 1px solid rgba(150, 150, 150, .5); font: bold 15px/16px "Liberation Sans", "Noto Sans CJK SC", sans-serif; }
```
